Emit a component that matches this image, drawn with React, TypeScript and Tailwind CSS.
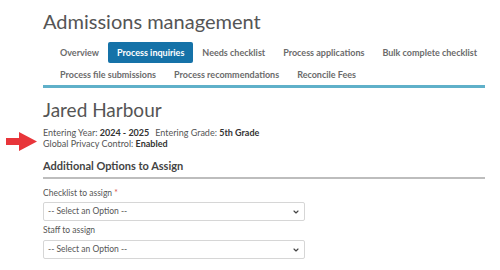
import { ChevronDown } from 'lucide-react';

const rowOne = ['Overview', 'Process inquiries', 'Needs checklist', 'Process applications', 'Bulk complete checklist'];
const rowTwo = ['Process file submissions', 'Process recommendations', 'Reconcile Fees'];

function Tab({ label, active }: { label: string; active?: boolean }) {
    return (
        <span
            className={`px-[9px] py-[5px] rounded-[2px] text-[9px] font-bold leading-[11px] whitespace-nowrap ${active ? 'bg-[#1572a8] text-white' : 'text-[#6b6b6b]'}`}
        >
            {label}
        </span>
    );
}

function SelectBox() {
    return (
        <div className="w-[262px] h-[19px] border border-[#d6d6d6] rounded-[2px] flex items-center justify-between pl-[4px] pr-[4px] text-[8.5px] text-[#555]">
            <span>-- Select an Option --</span>
            <ChevronDown className="w-[8px] h-[8px] text-[#444]" strokeWidth={3.5} />
        </div>
    );
}

export default function App() {
    return (
        <div className="w-[500px] h-[270px] bg-white relative overflow-hidden font-['Lato',sans-serif] text-[#555]">
            {/* red pointer arrow */}
            <svg className="absolute left-[5px] top-[131px]" width="33" height="21" viewBox="0 0 33 21">
                <path d="M1 7 H14 V1 L32 10.5 L14 20 V14 H1 Z" fill="#e8353a" />
            </svg>

            <div className="pl-[43px] pr-[15px]">
                <h1 className="text-[20px] font-normal text-[#555] leading-[24px] pt-[9px]">Admissions management</h1>

                <nav className="border-b-[3px] border-[#5fb0c9] mt-[9px]">
                    <div className="flex items-center pl-[8px]">
                        {rowOne.map((t) => (
                            <Tab key={t} label={t} active={t === 'Process inquiries'} />
                        ))}
                    </div>
                    <div className="flex items-center pl-[8px] mt-[1px]">
                        {rowTwo.map((t) => (
                            <Tab key={t} label={t} />
                        ))}
                    </div>
                </nav>

                <h2 className="text-[19px] font-normal text-[#555] leading-[22px] mt-[11px]">Jared Harbour</h2>
                <div className="text-[9px] leading-[11px] mt-[6px]">
                    <div>
                        Entering Year: <b className="text-[#333]">2024 - 2025</b>
                        <span className="ml-[6px]">Entering Grade: </span>
                        <b className="text-[#333]">5th Grade</b>
                    </div>
                    <div>
                        Global Privacy Control: <b className="text-[#333]">Enabled</b>
                    </div>
                </div>

                <h3 className="text-[11px] font-bold text-[#444] leading-[14px] mt-[10px] pb-[4px] border-b-2 border-[#bdbdbd]">
                    Additional Options to Assign
                </h3>

                <div className="mt-[9px] text-[8.5px]">
                    <label className="block leading-[11px] mb-[3px]">
                        Checklist to assign <span className="text-[#d9534f]">*</span>
                    </label>
                    <SelectBox />
                    <label className="block leading-[11px] mt-[4px] mb-[4px]">Staff to assign</label>
                    <SelectBox />
                </div>
            </div>
        </div>
    );
}
